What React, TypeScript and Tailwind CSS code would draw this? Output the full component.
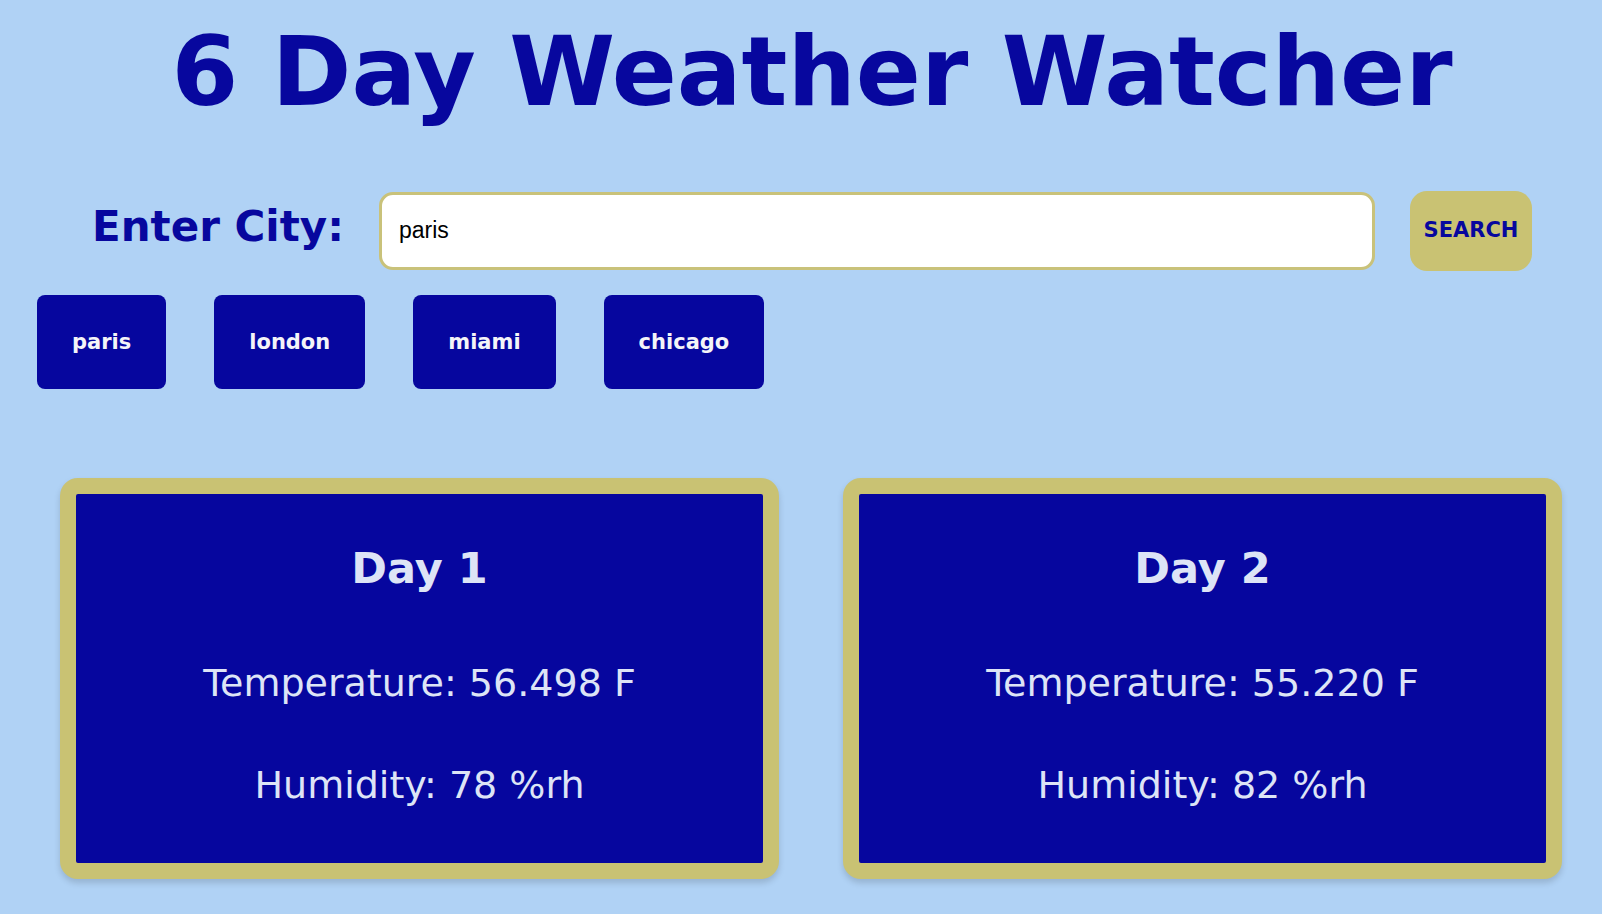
import { useState } from "react";

const CITIES = ["paris", "london", "miami", "chicago"];

const FORECAST = [
  { day: 1, temp: "56.498", humidity: 78 },
  { day: 2, temp: "55.220", humidity: 82 },
  { day: 3, temp: "54.104", humidity: 80 },
  { day: 4, temp: "57.812", humidity: 74 },
  { day: 5, temp: "59.360", humidity: 69 },
  { day: 6, temp: "58.010", humidity: 71 },
];

function DayCard({ day, temp, humidity }: { day: number; temp: string; humidity: number }) {
  return (
    <div className="h-[401px] w-[719px] shrink-0 rounded-[18px] border-[16px] border-[#c9c273] bg-[#06069e] shadow-[0_4px_6px_rgba(0,0,0,0.15)]">
      <div className="flex flex-col items-center pt-[49px] text-[#dde4f6]">
        <h2 className="text-[43px] font-bold leading-[1.164]">Day {day}</h2>
        <p className="mt-[68px] text-[38px] leading-[1.164]">Temperature: {temp} F</p>
        <p className="mt-[58px] text-[38px] leading-[1.164]">Humidity: {humidity} %rh</p>
      </div>
    </div>
  );
}

export default function App() {
  const [city, setCity] = useState("paris");

  return (
    <div className="min-h-screen bg-[#b0d2f5] pb-10 font-['DejaVu_Sans',Verdana,sans-serif]">
      <h1 className="pt-[17px] pl-[22px] text-center text-[96px] font-bold leading-[1.164] text-[#07079e]">
        6 Day Weather Watcher
      </h1>

      <div className="mt-[62px] flex items-center gap-[35px] pl-[92px]">
        <label htmlFor="city" className="mb-[6px] text-[42px] font-bold leading-[1.164] text-[#07079e]">
          Enter City:
        </label>
        <input
          id="city"
          value={city}
          onChange={(e) => setCity(e.target.value)}
          className="h-[78px] w-[996px] rounded-[14px] border-[3px] border-[#c9c27a] bg-white px-[17px] font-['Liberation_Sans',Arial,sans-serif] text-[23px] text-black outline-none"
        />
        <button
          type="button"
          className="h-[80px] w-[122px] rounded-[17px] bg-[#c9c273] text-[21px] font-bold text-[#07079e]"
        >
          SEARCH
        </button>
      </div>

      <div className="mt-[24px] flex gap-[48px] pl-[37px]">
        {CITIES.map((c) => (
          <button
            key={c}
            type="button"
            onClick={() => setCity(c)}
            className="rounded-[8px] bg-[#06069e] px-[35px] py-[35px] text-[21px] font-bold leading-[1.164] text-[#f4f4f8]"
          >
            {c}
          </button>
        ))}
      </div>

      <div className="mt-[89px] flex flex-wrap gap-x-[64px] gap-y-[60px] pl-[60px]">
        {FORECAST.map((f) => (
          <DayCard key={f.day} {...f} />
        ))}
      </div>
    </div>
  );
}
